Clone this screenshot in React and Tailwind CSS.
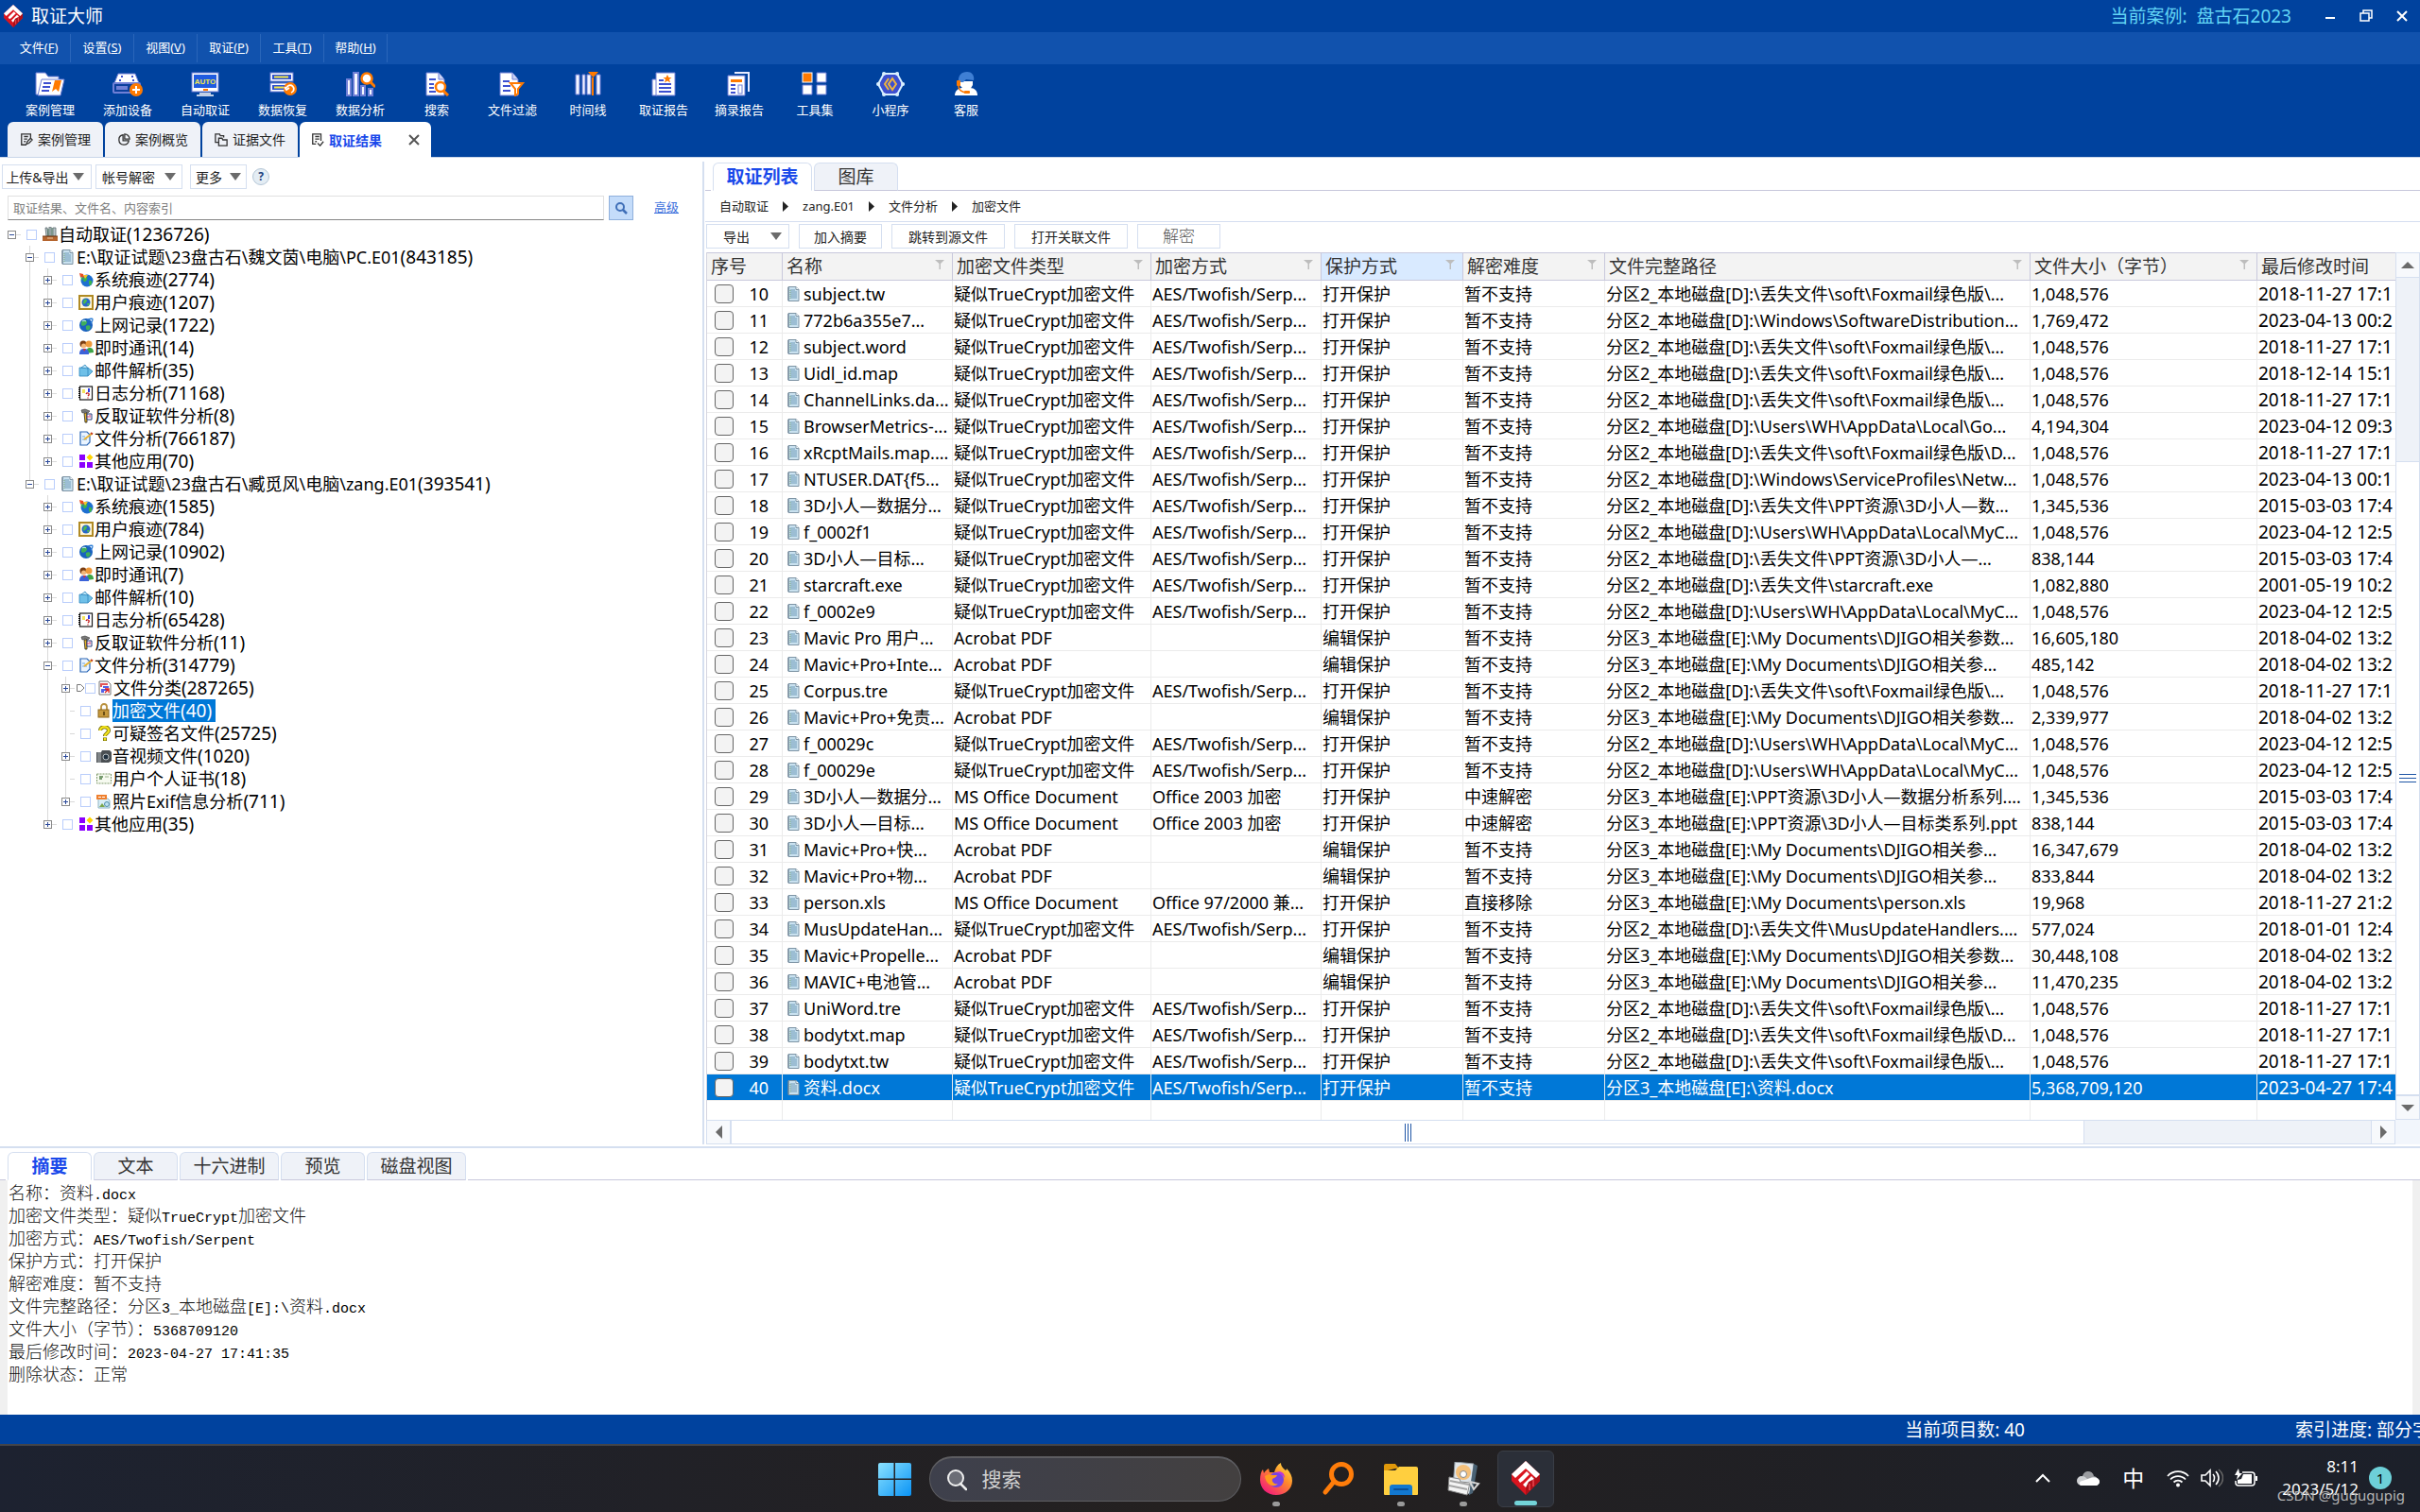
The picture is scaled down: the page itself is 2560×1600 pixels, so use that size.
import React from "react";

/* ---------- brand mark ---------- */
function Brand({ className }) {
  return (
    <svg viewBox="0 0 30 36" className={className} aria-hidden="true">
      <path d="M15 0 L30 14 V21 L15 36 L0 21 V14 Z" fill="#d9151f" />
      <path d="M15 36 L30 21 V14 L15 23 Z" fill="#b00f18" />
      <path d="M15 0 L30 14 L26 18 L15 8 L4 18 L0 14 Z" fill="#fff" />
      <path d="M7 20 L16 11 L19 14 L12 21 L9 23 Z" fill="#fff" />
      <path d="M12 25 L21 16 L24 19 L18 22 L15 28 Z" fill="#fff" />
      <path d="M19 24 V31 M23 20 V27" stroke="#e94a50" strokeWidth="1.5" />
    </svg>
  );
}

/* ---------- toolbar icons, 32 x 26 ---------- */
const P = "#6f7fd6";
const O = "#ff7a00";
const TOOL_ICONS = {
  cases: (
    <>
      <path d="M1 1h10l3 4h11v19H1z" fill="#fff" stroke={P} />
      <path d="M7 8h24l-4 17H3z" fill="#fff" stroke={P} />
      <path d="M9 12h8M8 16h8M7 20h8" stroke="#3c4fd0" strokeWidth="2" />
      <path d="M21 9h7l-3 12-3-3-4 3z" fill={O} />
    </>
  ),
  device: (
    <>
      <path d="M6 2h18l4 10H2z" fill="#fff" stroke={P} />
      <rect x="1" y="12" width="28" height="10" rx="1" fill="#0b3f9c" stroke={P} strokeWidth="2" />
      <rect x="4" y="15" width="12" height="4" fill={P} />
      <path d="M9 4h2v2H9zM20 4h2v2h-2zM7 8h2v2H7zM21 8h2v2h-2z" fill="#3c4fd0" />
      <circle cx="25" cy="19" r="7" fill={O} />
      <path d="M25 15v8M21 19h8" stroke="#fff" strokeWidth="2" />
    </>
  ),
  auto: (
    <>
      <rect x="2" y="1" width="28" height="20" fill="#fff" stroke={P} />
      <rect x="4" y="3" width="24" height="14" fill="#1f5be0" />
      <text x="16" y="13" textAnchor="middle" fontSize="8" fontWeight="700" fontFamily="Liberation Sans, sans-serif" fill="#f3e94a">AUTO</text>
      <rect x="14" y="18" width="5" height="2" fill={O} />
      <path d="M10 23h12M7 25h18" stroke="#fff" strokeWidth="1.5" />
    </>
  ),
  recover: (
    <>
      <rect x="3" y="1" width="24" height="9" fill="#fff" stroke={P} />
      <rect x="5" y="3" width="20" height="5" fill="#2d4fd0" />
      <path d="M7 5.500h15" stroke="#f3e94a" strokeWidth="2" />
      <rect x="3" y="12" width="24" height="9" fill="#fff" stroke={P} />
      <rect x="5" y="14" width="14" height="5" fill="#2d4fd0" />
      <path d="M7 16.500h10" stroke="#f3e94a" strokeWidth="2" />
      <circle cx="24" cy="18" r="7" fill={O} />
      <path d="M20 17a4 4 0 1 1 5 5M18 16l2 3 3-2" stroke="#fff" strokeWidth="1.800" fill="none" />
    </>
  ),
  analysis: (
    <>
      <path d="M2 8h4v17H2zM9 1h5v24H9zM17 15h4v10h-4zM25 18h4v7h-4z" fill="#f4f6ff" stroke={P} strokeWidth="2" />
      <circle cx="23" cy="7" r="5.500" fill="#fff" stroke={O} strokeWidth="2.500" />
      <path d="M27 11l5 5" stroke={O} strokeWidth="3" />
    </>
  ),
  search: (
    <>
      <path d="M5 1h13l6 7v17H5z" fill="#fff" stroke={P} />
      <path d="M18 1v7h6" fill="#cdd5f5" stroke={P} />
      <path d="M8 8h7M8 13h5M8 17h5M8 21h7" stroke="#3c4fd0" strokeWidth="2" />
      <circle cx="20" cy="16" r="5" fill="#fff" stroke={O} strokeWidth="2.500" />
      <path d="M23 20l5 5" stroke={O} strokeWidth="3" />
    </>
  ),
  filter: (
    <>
      <path d="M3 1h13l6 7v17H3z" fill="#fff" stroke={P} />
      <path d="M16 1v7h6" fill="#cdd5f5" stroke={P} />
      <path d="M6 10h7M6 15h8M6 20h8" stroke="#3c4fd0" strokeWidth="2" />
      <path d="M14 12h13l-5 6v5l-3 2v-7z" fill="#fff" stroke={O} strokeWidth="2" />
    </>
  ),
  timeline: (
    <>
      <path d="M3 3h4v21H3zM10 3h3v21h-3zM15 3h4v21h-4zM25 3h4v21h-4z" fill="#f4f6ff" stroke={P} />
      <path d="M21 6v19" stroke={O} strokeWidth="2" />
      <path d="M16 0h11l-5.500 6z" fill={O} />
    </>
  ),
  report: (
    <>
      <path d="M4 8h5v17H4z" fill="#fff" stroke={P} />
      <path d="M8 1h20v24H8z" fill="#fff" stroke={P} />
      <path d="M20 3l1.500 3h3l-2.500 2 1 3.500-3-2-3 2 1-3.500-2.500-2h3z" fill={O} />
      <path d="M11 9h5M11 13h13M11 17h13M11 21h13" stroke="#3c4fd0" strokeWidth="2" />
    </>
  ),
  excerpt: (
    <>
      <path d="M11 1h15v20" fill="none" stroke="#e7ebff" strokeWidth="2" />
      <path d="M4 4h18v21H4z" fill="#fff" stroke={P} />
      <rect x="7" y="8" width="12" height="3" fill={O} />
      <path d="M7 14h5M7 18h5M7 22h5" stroke="#3c4fd0" strokeWidth="2" />
      <rect x="15" y="14" width="4" height="9" fill="#fff" stroke={P} />
    </>
  ),
  tools: (
    <>
      <rect x="3" y="1" width="10" height="10" fill={O} stroke="#fff" />
      <path d="M18 1h10v10H18zM3 14h10v10H3zM18 14h10v10H18z" fill="#fff" stroke={P} />
    </>
  ),
  mini: (
    <>
      <path d="M9 2h14l6 11-6 11H9L3 13z" fill="#3c4fd0" stroke="#d9f0ff" strokeWidth="2" />
      <path d="M9 2h.1M23 2h.1M29 13h.1M23 24h.1M9 24h.1M3 13h.1" stroke="#d9f0ff" strokeWidth="4" strokeLinecap="round" />
      <path d="M14 7l-4 6 4 6M18 7l-4 6 4 6 4-6z" fill="none" stroke="#f0b43c" strokeWidth="2" />
    </>
  ),
  service: (
    <>
      <path d="M4 25c0-5 4-8 8-8h8c5 0 8 3 8 8z" fill="#fff" />
      <path d="M9 10h14v4l-3 5h-6l-4-4z" fill="#fff" />
      <path d="M8 11C7 4 11 0 17 0s8 5 7 9l-8-1-3 3z" fill="#3f7fd4" />
      <rect x="6" y="9" width="4" height="6" rx="1" fill={O} />
      <path d="M8 15c0 4 3 6 7 7" stroke={O} strokeWidth="1.500" fill="none" />
      <rect x="14" y="20" width="6" height="3" rx="1" fill={O} />
    </>
  ),
};

const TOOLS = [
  ["案例管理", "cases"],
  ["添加设备", "device"],
  ["自动取证", "auto"],
  ["数据恢复", "recover"],
  ["数据分析", "analysis"],
  ["搜索", "search"],
  ["文件过滤", "filter"],
  ["时间线", "timeline"],
  ["取证报告", "report"],
  ["摘录报告", "excerpt"],
  ["工具集", "tools"],
  ["小程序", "mini"],
  ["客服", "service"],
];

const MENUS = [
  ["文件", "F"],
  ["设置", "S"],
  ["视图", "V"],
  ["取证", "P"],
  ["工具", "T"],
  ["帮助", "H"],
];

/* ---------- tree icons, 16 x 16 ---------- */
const DOC = (
  <>
    <path d="M2 .5h8l3 3v12H2z" fill="#c9e1ef" stroke="#7f95a5" />
    <path d="M10 .5v3h3" fill="#fff" stroke="#7f95a5" />
    <path d="M2 1v14" stroke="#62788a" />
    <path d="M4 4h5M4 6h7M4 8h7M4 10h7M4 12h7" stroke="#6f9ab8" />
    <path d="M4 4v9" stroke="#7fae7c" strokeDasharray="1 1" />
  </>
);
const TREE_ICONS = {
  root: (
    <>
      <path d="M3 1l2 0 1 9H4zM7 0h2v10H7zM11 1h3v9h-3z" fill="#b8c6c9" stroke="#5e6b6e" strokeWidth=".8" />
      <path d="M6 2v8M10 1v9" stroke="#3d6b57" />
      <path d="M0 10h16v5H0z" fill="#b5652f" />
      <path d="M0 10h16" stroke="#6b3413" />
      <path d="M5 12h6" stroke="#f0d0a8" />
    </>
  ),
  disk: DOC,
  sys: (
    <>
      <circle cx="9" cy="9" r="6.500" fill="#1d6fd0" />
      <path d="M6 5c3-1 4 1 3 3s-3 3-4 1zM11 9c2-1 4 0 3 3s-3 2-3 0z" fill="#3cb54a" />
      <path d="M1 1l4 1 1 4-4-1z" fill="#e84c22" />
      <path d="M5 3l5 0-3 4z" fill="#f6c52b" />
      <path d="M2 5l2 4 1-3z" fill="#3cb54a" />
    </>
  ),
  user: (
    <>
      <rect x="1" y="1" width="14" height="14" fill="#fff6d6" stroke="#b08a24" strokeWidth="2" />
      <circle cx="8" cy="8" r="4.500" fill="#2767c9" />
      <path d="M6 5c3-1 4 1 2 3s-3 2-3 0zM9 9l3 0-2 3z" fill="#4cba50" />
    </>
  ),
  web: (
    <>
      <circle cx="8" cy="8" r="7" fill="#1a62bf" />
      <path d="M3 5c1-3 6-3 6 0S4 10 3 8zM8 9c3-2 6 0 4 3s-5 1-4-3z" fill="#3fae5a" />
      <path d="M10 2c3-1 5-1 5 0s-1 3-2 4" stroke="#2f7fd6" strokeWidth="1.300" fill="none" />
      <path d="M4 4c1-1 3-1 4 0" stroke="#d5f3ff" fill="none" />
    </>
  ),
  im: (
    <>
      <circle cx="5" cy="4" r="3.500" fill="#7a3d12" />
      <circle cx="11" cy="4" r="3.500" fill="#ef9a3c" />
      <path d="M8 14c0-5 2-6 4-6s4 1 4 5z" fill="#3da446" />
      <circle cx="5.500" cy="6" r="2.500" fill="#f2b77a" />
      <path d="M1 15c0-5 2-6 5-6s5 1 5 6z" fill="#3b62d9" />
      <path d="M5 9l1 3 2-3z" fill="#d83434" />
    </>
  ),
  mail: (
    <>
      <path d="M1 5h9l5 4-5 5H1z" fill="#6fc0e8" stroke="#2f86bd" strokeWidth=".8" />
      <path d="M3 5l4-3 3 4z" fill="#b9e4f7" stroke="#2f86bd" strokeWidth=".8" />
      <path d="M10 5v9" stroke="#2f86bd" strokeWidth=".8" />
    </>
  ),
  log: (
    <>
      <rect x="1.500" y="1" width="13" height="14" fill="#fff" stroke="#1a1a1a" strokeWidth="1.200" />
      <path d="M1 2v12" stroke="#000" strokeWidth="2" strokeDasharray="1 1" />
      <path d="M4 4h3v4H4z" fill="#f2e35b" />
      <path d="M11 3v4" stroke="#2a3be0" strokeWidth="2" />
      <path d="M8 9c1-2 4-1 3 1l-1 1M10 12.500v1" stroke="#c01a1a" strokeWidth="1.300" fill="none" />
    </>
  ),
  anti: (
    <>
      <path d="M3 2l4-1 5 2-2 2-3-1-3 1z" fill="#7b7b7b" stroke="#333" strokeWidth=".6" />
      <path d="M6 5h3v10H7z" fill="#e3b229" stroke="#222" strokeWidth=".8" />
      <path d="M9 6h5v6H9z" fill="#fff" stroke="#24387a" />
      <path d="M10 10V8M12 10V7" stroke="#d22f6b" />
    </>
  ),
  file: (
    <>
      <path d="M2 1h7l3 3v8l-3 3H2z" fill="#eaf4ff" stroke="#2b67b5" strokeWidth="1.200" />
      <path d="M4 6h3M4 9h5" stroke="#69a4de" />
      <path d="M6 9l8-6" stroke="#e9b534" strokeWidth="2" />
      <path d="M13 2l2 1.500" stroke="#c43b1c" strokeWidth="2" />
    </>
  ),
  other: (
    <>
      <path d="M1 1h6v6H1zM1 9h6v6H1zM9 9h6v6H9z" fill="#8a00ff" />
      <path d="M12 .5l3.500 3.500L12 7.500 8.500 4z" fill="#ffd400" />
    </>
  ),
  category: (
    <>
      <path d="M2 1h9l3 3v11H2z" fill="#fff" stroke="#777" />
      <path d="M4 3v4M5 4h6" stroke="#d81e1e" strokeWidth="1.500" />
      <path d="M6 7h6M4 10h6M4 12h3" stroke="#1b2ee0" strokeWidth="1.500" />
      <path d="M8 9l4 0 0 4M8 13l4-4" stroke="#e01b1b" strokeWidth="1.300" fill="none" />
    </>
  ),
  lock: (
    <>
      <path d="M5 7V4a3 3 0 0 1 6 0v3" stroke="#b9913e" strokeWidth="1.800" fill="none" />
      <rect x="2" y="7" width="11" height="8" fill="#c79a3e" stroke="#8c6517" />
      <path d="M8 9v4" stroke="#4c3508" strokeWidth="1.500" />
    </>
  ),
  question: (
    <>
      <path d="M4 5c0-5 9-5 9 0 0 3-4 3-4 6M9 12.500V16" stroke="#6b6400" strokeWidth="4" fill="none" />
      <path d="M4 5c0-5 9-5 9 0 0 3-4 3-4 6M9 13v2.500" stroke="#f2e21c" strokeWidth="2.500" fill="none" />
    </>
  ),
  media: (
    <>
      <path d="M0 4h5l1-2h8l2 2v9l-3 2H0z" fill="#4a4f53" />
      <path d="M2 4v11M4 4v11" stroke="#b4babd" />
      <circle cx="10" cy="9" r="3" fill="#20303f" stroke="#b8c0c4" />
    </>
  ),
  cert: (
    <>
      <rect x=".5" y="3" width="15" height="10" fill="#f6faf0" stroke="#7f9a6a" strokeDasharray="2 1" />
      <path d="M3 6h4M3 8h3" stroke="#4f7d46" strokeWidth="1.500" />
      <path d="M9 6h4" stroke="#9bb28b" />
    </>
  ),
  exif: (
    <>
      <path d="M2 5h10l2 2v8H2z" fill="#d9eef7" stroke="#8fb5c5" />
      <rect x="0" y="1" width="11" height="5" fill="#ef7f2d" />
      <path d="M2 3.500h3M6 3.500h3" stroke="#fff" />
      <path d="M3 14l3-4 3 4z" fill="#7aa64b" />
      <circle cx="11" cy="11" r="2.500" fill="#bfe2f2" stroke="#4c8aa8" />
    </>
  ),
};

/* level, text, count, icon, state ("-" open, "+" closed, "" leaf), ancestor levels with a running line, selected, last child */
const TREE = [
  [0, "自动取证", 1236726, "root", "-", [], false, true],
  [1, "E:\\取证试题\\23盘古石\\魏文茵\\电脑\\PC.E01", 843185, "disk", "-", []],
  [2, "系统痕迹", 2774, "sys", "+", [1]],
  [2, "用户痕迹", 1207, "user", "+", [1]],
  [2, "上网记录", 1722, "web", "+", [1]],
  [2, "即时通讯", 14, "im", "+", [1]],
  [2, "邮件解析", 35, "mail", "+", [1]],
  [2, "日志分析", 71168, "log", "+", [1]],
  [2, "反取证软件分析", 8, "anti", "+", [1]],
  [2, "文件分析", 766187, "file", "+", [1]],
  [2, "其他应用", 70, "other", "+", [1], false, true],
  [1, "E:\\取证试题\\23盘古石\\臧觅风\\电脑\\zang.E01", 393541, "disk", "-", [], false, true],
  [2, "系统痕迹", 1585, "sys", "+", []],
  [2, "用户痕迹", 784, "user", "+", []],
  [2, "上网记录", 10902, "web", "+", []],
  [2, "即时通讯", 7, "im", "+", []],
  [2, "邮件解析", 10, "mail", "+", []],
  [2, "日志分析", 65428, "log", "+", []],
  [2, "反取证软件分析", 11, "anti", "+", []],
  [2, "文件分析", 314779, "file", "-", []],
  [3, "文件分类", 287265, "category", "+", [2]],
  [3, "加密文件", 40, "lock", "", [2], true],
  [3, "可疑签名文件", 25725, "question", "", [2]],
  [3, "音视频文件", 1020, "media", "+", [2]],
  [3, "用户个人证书", 18, "cert", "", [2]],
  [3, "照片Exif信息分析", 711, "exif", "+", [2], false, true],
  [2, "其他应用", 35, "other", "+", [], false, true],
];

function TreeRow({ item }) {
  const [level, label, count, icon, state, guides, selected, last] = item;
  const ancestors = Array.from({ length: level }, (_, i) => i);
  return (
    <li className="flex h-6 items-center pl-[3px]">
      {ancestors.map((l) => (
        <span key={l} className="flex h-6 w-[19px] shrink-0 justify-center">
          {guides.includes(l) && <span className="w-px bg-[#d9d9d9]" />}
        </span>
      ))}
      <span className="flex h-6 w-[19px] shrink-0 items-center pl-[5px]">
        <span className="flex h-6 w-[9px] flex-col items-center">
          <span className={`w-px flex-1 ${level ? "bg-[#d9d9d9]" : ""}`} />
          {state ? (
            <button
              type="button"
              aria-label={`${state === "+" ? "展开" : "折叠"}${label}`}
              className="flex size-[9px] items-center justify-center border border-[#8a8a8a] bg-white"
            >
              <svg viewBox="0 0 7 7" className="size-[7px]" aria-hidden="true">
                <path d={state === "+" ? "M1 3.500h5M3.500 1v5" : "M1 3.500h5"} stroke="#2c4a9a" />
              </svg>
            </button>
          ) : (
            <span className="h-px w-px bg-[#d9d9d9]" />
          )}
          <span className={`w-px flex-1 ${level && !last ? "bg-[#d9d9d9]" : ""}`} />
        </span>
        <span className="h-px flex-1 bg-[#d9d9d9]" />
      </span>
      {icon === "category" && (
        <svg viewBox="0 0 9 8" className="ml-0.5 h-2 w-[9px] shrink-0" aria-hidden="true">
          <path d="M.5 .5h4L8 4 4.500 7.500h-4z" fill="#fff" stroke="#777" />
        </svg>
      )}
      <input
        type="checkbox"
        aria-label={label}
        className={`size-[11px] shrink-0 appearance-none border border-[#b9cdfb] bg-white ${icon === "category" ? "mr-0.5" : "mr-1.5 ml-1.5"}`}
      />
      <svg viewBox="0 0 16 16" className="size-4 shrink-0" aria-hidden="true">
        {TREE_ICONS[icon]}
      </svg>
      <span className={`ml-px h-6 text-[18px] leading-6 whitespace-nowrap ${selected ? "bg-[#0078d7] pr-1 text-white" : "text-black"}`}>
        {label}
        <span className="text-[19px]">({count})</span>
      </span>
    </li>
  );
}

/* ---------- result table ---------- */
const TC = ["疑似TrueCrypt加密文件", "AES/Twofish/Serp...", "打开保护", "暂不支持"];
const PDF = ["Acrobat PDF", "", "编辑保护", "暂不支持"];
const PPT = ["MS Office Document", "Office 2003 加密", "打开保护", "中速解密"];
const D = "分区2_本地磁盘[D]:\\";
const E = "分区3_本地磁盘[E]:\\";

const ROWS = [
  [10, "subject.tw", TC, D + "丢失文件\\soft\\Foxmail绿色版\\...", "1,048,576", "2018-11-27 17:1"],
  [11, "772b6a355e7...", TC, D + "Windows\\SoftwareDistribution...", "1,769,472", "2023-04-13 00:2"],
  [12, "subject.word", TC, D + "丢失文件\\soft\\Foxmail绿色版\\...", "1,048,576", "2018-11-27 17:1"],
  [13, "Uidl_id.map", TC, D + "丢失文件\\soft\\Foxmail绿色版\\...", "1,048,576", "2018-12-14 15:1"],
  [14, "ChannelLinks.da...", TC, D + "丢失文件\\soft\\Foxmail绿色版\\...", "1,048,576", "2018-11-27 17:1"],
  [15, "BrowserMetrics-...", TC, D + "Users\\WH\\AppData\\Local\\Go...", "4,194,304", "2023-04-12 09:3"],
  [16, "xRcptMails.map....", TC, D + "丢失文件\\soft\\Foxmail绿色版\\D...", "1,048,576", "2018-11-27 17:1"],
  [17, "NTUSER.DAT{f5...", TC, D + "Windows\\ServiceProfiles\\Netw...", "1,048,576", "2023-04-13 00:1"],
  [18, "3D小人—数据分...", TC, D + "丢失文件\\PPT资源\\3D小人—数...", "1,345,536", "2015-03-03 17:4"],
  [19, "f_0002f1", TC, D + "Users\\WH\\AppData\\Local\\MyC...", "1,048,576", "2023-04-12 12:5"],
  [20, "3D小人—目标...", TC, D + "丢失文件\\PPT资源\\3D小人—...", "838,144", "2015-03-03 17:4"],
  [21, "starcraft.exe", TC, D + "丢失文件\\starcraft.exe", "1,082,880", "2001-05-19 10:2"],
  [22, "f_0002e9", TC, D + "Users\\WH\\AppData\\Local\\MyC...", "1,048,576", "2023-04-12 12:5"],
  [23, "Mavic Pro 用户...", PDF, E + "My Documents\\DJIGO相关参数...", "16,605,180", "2018-04-02 13:2"],
  [24, "Mavic+Pro+Inte...", PDF, E + "My Documents\\DJIGO相关参...", "485,142", "2018-04-02 13:2"],
  [25, "Corpus.tre", TC, D + "丢失文件\\soft\\Foxmail绿色版\\...", "1,048,576", "2018-11-27 17:1"],
  [26, "Mavic+Pro+免责...", PDF, E + "My Documents\\DJIGO相关参数...", "2,339,977", "2018-04-02 13:2"],
  [27, "f_00029c", TC, D + "Users\\WH\\AppData\\Local\\MyC...", "1,048,576", "2023-04-12 12:5"],
  [28, "f_00029e", TC, D + "Users\\WH\\AppData\\Local\\MyC...", "1,048,576", "2023-04-12 12:5"],
  [29, "3D小人—数据分...", PPT, E + "PPT资源\\3D小人—数据分析系列....", "1,345,536", "2015-03-03 17:4"],
  [30, "3D小人—目标...", PPT, E + "PPT资源\\3D小人—目标类系列.ppt", "838,144", "2015-03-03 17:4"],
  [31, "Mavic+Pro+快...", PDF, E + "My Documents\\DJIGO相关参...", "16,347,679", "2018-04-02 13:2"],
  [32, "Mavic+Pro+物...", PDF, E + "My Documents\\DJIGO相关参...", "833,844", "2018-04-02 13:2"],
  [33, "person.xls", ["MS Office Document", "Office 97/2000 兼...", "打开保护", "直接移除"], E + "My Documents\\person.xls", "19,968", "2018-11-27 21:2"],
  [34, "MusUpdateHan...", TC, D + "丢失文件\\MusUpdateHandlers....", "577,024", "2018-01-01 12:4"],
  [35, "Mavic+Propelle...", PDF, E + "My Documents\\DJIGO相关参数...", "30,448,108", "2018-04-02 13:2"],
  [36, "MAVIC+电池管...", PDF, E + "My Documents\\DJIGO相关参...", "11,470,235", "2018-04-02 13:2"],
  [37, "UniWord.tre", TC, D + "丢失文件\\soft\\Foxmail绿色版\\...", "1,048,576", "2018-11-27 17:1"],
  [38, "bodytxt.map", TC, D + "丢失文件\\soft\\Foxmail绿色版\\D...", "1,048,576", "2018-11-27 17:1"],
  [39, "bodytxt.tw", TC, D + "丢失文件\\soft\\Foxmail绿色版\\...", "1,048,576", "2018-11-27 17:1"],
  [40, "资料.docx", TC, E + "资料.docx", "5,368,709,120", "2023-04-27 17:4"],
];

const COLUMNS = [
  ["序号", false],
  ["名称", true],
  ["加密文件类型", true],
  ["加密方式", true],
  ["保护方式", true],
  ["解密难度", true],
  ["文件完整路径", true],
  ["文件大小（字节）", true],
  ["最后修改时间", false],
];

const SUMMARY = [
  "名称：资料.docx",
  "加密文件类型：疑似TrueCrypt加密文件",
  "加密方式：AES/Twofish/Serpent",
  "保护方式：打开保护",
  "解密难度：暂不支持",
  "文件完整路径：分区3_本地磁盘[E]:\\资料.docx",
  "文件大小（字节）：5368709120",
  "最后修改时间：2023-04-27 17:41:35",
  "删除状态：正常",
];

/* Latin runs use a half-width monospace face beside the full-width characters */
function MonoLine({ text }) {
  return (
    <p>
      {text.split(/([\x20-\x7e]+)/).map((run, i) =>
        i % 2 ? (
          <span key={i} className="font-['Liberation_Mono',monospace] text-[15px] leading-none text-black">{run}</span>
        ) : (
          run
        )
      )}
    </p>
  );
}

function Caret({ className = "" }) {
  return (
    <svg viewBox="0 0 12 8" className={`h-2 w-3 shrink-0 ${className}`} aria-hidden="true">
      <path d="M0 0h12L6 8z" fill="#6b6b6b" />
    </svg>
  );
}

function Arrow({ dir }) {
  const d = { up: "M0 7h14L7 0z", down: "M0 0h14L7 7z", left: "M7 0v14L0 7z", right: "M0 0v14l7-7z" }[dir];
  const flat = dir === "up" || dir === "down";
  return (
    <svg viewBox={flat ? "0 0 14 7" : "0 0 7 14"} className={flat ? "h-[7px] w-3.5" : "h-3.5 w-[7px]"} aria-hidden="true">
      <path d={d} fill="#6b6b6b" />
    </svg>
  );
}

function PlainButton({ children, className = "" }) {
  return (
    <button type="button" className={`flex h-[26px] items-center justify-center border border-[#d5dff0] bg-white text-[14px] whitespace-nowrap text-[#222] ${className}`}>
      {children}
    </button>
  );
}

function PaneTab({ children, active, className = "" }) {
  return (
    <button
      type="button"
      className={`h-[30px] rounded-t-md border border-[#d5dff0] text-[19px] leading-7 ${active ? "border-b-white bg-white font-bold text-[#1a49ea]" : "border-b-[#c8c8dc] bg-[#eff2f8] text-[#333]"} ${className}`}
    >
      {children}
    </button>
  );
}

const DOC_TABS = [
  ["案例管理", <path key="a" d="M8 14H2V1h11v6M5 4h5M5 7h4M5 10h2M8 13l1-3 4-4 2 2-4 4z" />],
  ["案例概览", <path key="b" d="M7 2a6 6 0 1 0 7 7H7zM9 1v6h6a6 6 0 0 0-6-6z" />],
  ["证据文件", <path key="c" d="M5 11H1V1h5l1 2h4v2M5 6h4l1 2h5v7H5z" />],
];

function Header() {
  return (
    <header className="bg-[#00429e] text-white">
      <div className="flex h-[34px] items-center pr-3 pl-1">
        <Brand className="h-6 w-5" />
        <h1 className="ml-[9px] flex-1 text-[19px]">取证大师</h1>
        <span className="text-[19px] text-[#62d5f5]">当前案例:&nbsp; 盘古石2023</span>
        <div className="ml-9 flex items-center gap-6">
          <button type="button" aria-label="最小化" className="flex size-3 items-center">
            <span className="mt-1 h-0.5 w-2.5 bg-white" />
          </button>
          <button type="button" aria-label="还原" className="size-3.5">
            <svg viewBox="0 0 14 14" className="size-3.5" aria-hidden="true">
              <path d="M4 4V1h9v8h-3M1 4h9v8H1z" fill="none" stroke="#fff" strokeWidth="1.500" />
            </svg>
          </button>
          <button type="button" aria-label="关闭" className="size-3.5">
            <svg viewBox="0 0 14 14" className="size-3.5" aria-hidden="true">
              <path d="M2 2l10 10M12 2L2 12" stroke="#fff" strokeWidth="2" />
            </svg>
          </button>
        </div>
      </div>

      <nav className="flex h-[34px] items-center bg-[#1152ad] pl-2" aria-label="菜单">
        {MENUS.map(([label, key]) => (
          <button key={key} type="button" className="h-[30px] w-[67px] border-r border-[#2a66ba] text-[13px]">
            {label}(<u>{key}</u>)
          </button>
        ))}
      </nav>

      <div className="flex h-[61px] pt-2 pl-3">
        {TOOLS.map(([label, icon], i) => (
          <button key={label} type="button" className={`flex flex-col items-center ${i < 5 ? "w-[82px]" : "w-20"}`}>
            <svg viewBox="0 0 32 26" className="h-[26px] w-8" fill="none" aria-hidden="true">
              {TOOL_ICONS[icon]}
            </svg>
            <span className="mt-1 text-[13px] leading-5">{label}</span>
          </button>
        ))}
      </div>

      <div className="flex h-[38px] gap-0.5 border-b border-[#c9d6ea] pl-2">
        {DOC_TABS.map(([label, icon]) => (
          <button key={label} type="button" className="flex w-[101px] items-center justify-center gap-[5px] rounded-t-md bg-[#eff2f8] text-[14px] text-[#222]">
            <svg viewBox="0 0 16 16" className="size-3.5" fill="none" stroke="#333" strokeWidth="1.500" aria-hidden="true">
              {icon}
            </svg>
            {label}
          </button>
        ))}
        <div className="-mb-px flex w-[139px] items-center rounded-t-md bg-white pl-3">
          <button type="button" className="flex flex-1 items-center gap-[5px] text-[14px] font-bold text-[#1a49ea]">
            <svg viewBox="0 0 16 16" className="size-3.5" fill="none" stroke="#333" strokeWidth="1.500" aria-hidden="true">
              <path d="M6 13H2V1h10v8M5 4h5M5 7h5M5 10h2M8 12l3 3 4-5" />
            </svg>
            取证结果
          </button>
          <button type="button" aria-label="关闭标签" className="mr-3">
            <svg viewBox="0 0 12 12" className="size-3" aria-hidden="true">
              <path d="M1 1l10 10M11 1L1 11" stroke="#555" strokeWidth="2" />
            </svg>
          </button>
        </div>
      </div>
    </header>
  );
}

function LeftPane() {
  return (
    <aside className="w-[743px] shrink-0 pt-[7px]">
      <div className="flex items-center pl-0.5">
        <PlainButton className="w-[95px] gap-1 pr-1">上传&amp;导出<Caret /></PlainButton>
        <PlainButton className="ml-1 w-[92px] gap-2.5">帐号解密<Caret /></PlainButton>
        <PlainButton className="ml-2 w-[60px] gap-2">更多<Caret /></PlainButton>
        <button type="button" aria-label="帮助" className="ml-1.5 size-[18px] rounded-full border border-[#b4c6d6] bg-[#e4edf4] text-[12px] leading-4 font-bold text-[#1c3f7c]">?</button>
      </div>
      <form className="mt-[7px] flex items-center pl-2" onSubmit={(e) => e.preventDefault()}>
        <input
          type="text"
          aria-label="搜索取证结果"
          placeholder="取证结果、文件名、内容索引"
          className="h-[26px] w-[631px] border border-[#e0e0e0] border-b-[#868686] pl-[5px] text-[13px] placeholder:text-[#808080]"
        />
        <button type="submit" aria-label="搜索" className="ml-[5px] flex h-[26px] w-[26px] items-center justify-center border border-[#8fb0dc] bg-[#c4dcfa]">
          <svg viewBox="0 0 14 14" className="size-3.5" aria-hidden="true">
            <circle cx="6" cy="6" r="4" fill="none" stroke="#3f6fb8" strokeWidth="2" />
            <path d="M9 9l4 4" stroke="#3f6fb8" strokeWidth="2.500" />
          </svg>
        </button>
        <a href="#advanced" className="ml-[22px] text-[13px] text-[#3b6fdc] underline">高级</a>
      </form>
      <ul className="mt-[3px]">
        {TREE.map((item, i) => (
          <TreeRow key={i} item={item} />
        ))}
      </ul>
    </aside>
  );
}

function ResultTable() {
  return (
    <table className="w-full table-fixed border-separate border-spacing-0 border-l border-[#d5d5e0] text-[18px] text-black">
      <colgroup>
        <col className="w-20" />
        <col className="w-[180px]" />
        <col className="w-[210px]" />
        <col className="w-[180px]" />
        <col className="w-[150px]" />
        <col className="w-[150px]" />
        <col className="w-[450px]" />
        <col className="w-60" />
        <col />
      </colgroup>
      <thead>
        <tr className="h-[30px]">
          {COLUMNS.map(([name, filter]) => (
            <th
              key={name}
              scope="col"
              className={`overflow-hidden border-y border-r border-[#c8c8dc] p-0 pl-1 text-left font-normal whitespace-nowrap text-[#333] last:border-r-0 ${name === "保护方式" ? "bg-[#d9eaff]" : "bg-[#f3f3f3]"}`}
            >
              <div className="flex h-7 items-center justify-between pr-2 text-[19px] leading-7">
                <span>{name}</span>
                {filter && (
                  <svg viewBox="0 0 10 10" className="mb-1 size-2.5" aria-hidden="true">
                    <path d="M0 0h10L6 4v6H4.500V4z" fill="#bdbdbd" />
                  </svg>
                )}
              </div>
            </th>
          ))}
        </tr>
      </thead>
      <tbody>
        {ROWS.map(([no, name, [type, method, guard, level], path, size, date]) => {
          const sel = no === 40;
          return (
            <tr
              key={no}
              className={`h-7 [&>td]:overflow-hidden [&>td]:border-r [&>td]:border-b [&>td]:border-[#ebebeb] [&>td]:p-0 [&>td]:pt-px [&>td]:pl-px [&>td]:leading-[26px] [&>td]:whitespace-nowrap [&>td:last-child]:border-r-0 ${sel ? "bg-[#0078d7] text-white" : ""}`}
            >
              <td>
                <div className="flex items-center justify-between pr-3.5 pl-[7px]">
                  <input type="checkbox" aria-label={`选择 ${no}`} className="size-5 appearance-none rounded border border-[#666] bg-[#f3f3f3]" />
                  {no}
                </div>
              </td>
              <td>
                <div className="flex items-center gap-0.5 pl-[3px]">
                  <svg viewBox="0 0 16 16" className="size-4 shrink-0" aria-hidden="true">{DOC}</svg>
                  {name}
                </div>
              </td>
              <td>{type}</td>
              <td>{method}</td>
              <td>{guard}</td>
              <td>{level}</td>
              <td>{path}</td>
              <td>{size}</td>
              <td className="text-[19px]">{date}</td>
            </tr>
          );
        })}
        <tr className="h-5">
          {COLUMNS.map(([name]) => (
            <td key={name} className="border-r border-[#ebebeb] p-0 last:border-r-0" />
          ))}
        </tr>
      </tbody>
    </table>
  );
}

function RightPane() {
  return (
    <main className="min-w-0 flex-1 pl-px">
      <div className="flex gap-0.5 pt-[5px]">
        <span className="w-1.5 border-b border-[#c8c8dc]" />
        <PaneTab active className="w-[105px]">取证列表</PaneTab>
        <PaneTab className="w-[89px]">图库</PaneTab>
        <span className="-ml-0.5 flex-1 border-b border-[#c8c8dc]" />
      </div>
      <nav className="flex h-[33px] items-center gap-[15px] border-b border-[#d5dff0] pt-px pl-[15px] text-[13px] text-[#222]" aria-label="路径">
        {["自动取证", "zang.E01", "文件分析", "加密文件"].map((step, i) => (
          <React.Fragment key={step}>
            {i > 0 && (
              <svg viewBox="0 0 6 11" className="h-[11px] w-1.5" aria-hidden="true">
                <path d="M0 0l6 5.500L0 11z" fill="#222" />
              </svg>
            )}
            <a href="#step">{step}</a>
          </React.Fragment>
        ))}
      </nav>
      <div className="mb-1 flex gap-2.5 pt-0.5 pl-px">
        <PlainButton className="w-[88px] gap-[22px] pl-2.5">导出<Caret /></PlainButton>
        <PlainButton className="w-[88px]">加入摘要</PlainButton>
        <PlainButton className="w-[120px]">跳转到源文件</PlainButton>
        <PlainButton className="w-[120px]">打开关联文件</PlainButton>
        <button type="button" className="h-[26px] w-[88px] border border-[#d5dff0] text-[17px] leading-5 font-light text-[#555]">解密</button>
      </div>
      <div className="flex pl-px">
        <div className="min-w-0 flex-1 overflow-hidden">
          <ResultTable />
        </div>
        <div className="flex w-[26px] shrink-0 flex-col border border-[#d5dff0]" role="presentation">
          <span className="flex h-[25px] items-center justify-center bg-[#f7f9fc]"><Arrow dir="up" /></span>
          <span className="h-[196px] border-y border-[#d5dff0] bg-[#eef2f8]" />
          <span className="flex flex-1 flex-col items-center justify-center gap-[3px] bg-white">
            <span className="h-px w-[18px] bg-[#1f56a6]" />
            <span className="h-px w-[18px] bg-[#1f56a6]" />
            <span className="h-px w-[18px] bg-[#1f56a6]" />
          </span>
          <span className="flex h-[26px] items-center justify-center border-t-2 border-[#d5dff0] bg-[#f7f9fc]"><Arrow dir="down" /></span>
        </div>
      </div>
      <div className="mb-0.5 flex h-[26px] pl-px" role="presentation">
        <span className="flex w-[27px] items-center justify-center border border-r-2 border-[#d5dff0] bg-[#f7f9fc]"><Arrow dir="left" /></span>
        <span className="flex flex-1 items-center justify-center gap-0.5 border-y border-r border-[#d5dff0]">
          <span className="h-[19px] w-px bg-[#1f56a6]" />
          <span className="h-[19px] w-px bg-[#1f56a6]" />
          <span className="h-[19px] w-px bg-[#1f56a6]" />
        </span>
        <span className="w-[303px] border-y border-[#d5dff0] bg-[#eef2f8]" />
        <span className="flex w-[26px] items-center justify-center border border-[#d5dff0] bg-[#f7f9fc]"><Arrow dir="right" /></span>
        <span className="w-[26px] bg-[#f2f6fc]" />
      </div>
    </main>
  );
}

function BottomPane() {
  return (
    <section className="flex flex-1 flex-col border-t-2 border-[#d5dff0] pt-1">
      <div className="flex gap-0.5">
        <span className="w-1.5 border-b border-[#c8c8dc]" />
        <PaneTab active className="w-[89px]">摘要</PaneTab>
        <PaneTab className="w-[89px]">文本</PaneTab>
        <PaneTab className="w-[105px]">十六进制</PaneTab>
        <PaneTab className="w-[89px]">预览</PaneTab>
        <PaneTab className="w-[105px]">磁盘视图</PaneTab>
        <span className="flex-1 border-b border-[#c8c8dc]" />
      </div>
      <div className="flex-1 border-x-8 border-[#f0f0f0] pl-px font-['Noto_Sans_CJK_SC',sans-serif] text-[18px] leading-6 font-light text-[#111]">
        {SUMMARY.map((t) => (
          <MonoLine key={t} text={t} />
        ))}
      </div>
    </section>
  );
}

function TaskIcon({ label, children, dot, active }) {
  return (
    <button type="button" aria-label={label} className={`flex h-[60px] w-[60px] flex-col items-center justify-end rounded-md ${active ? "border border-[#3a3e46] bg-[#2b2f38]" : ""}`}>
      {children}
      <span className={`mt-1.5 mb-px h-[5px] rounded-full ${active ? "w-6 bg-[#73d3d8]" : dot ? "w-2 bg-[#9a9a9a]" : "w-2"}`} />
    </button>
  );
}

function Taskbar() {
  return (
    <footer className="relative grid h-[72px] grid-cols-[1fr_auto_1fr] items-center border-t-2 border-[#43454a] bg-linear-to-r from-[#1d2230] via-[#24201f] to-[#1c202a] text-white">
      <span />
      <div className="flex items-center pl-3">
        <button type="button" aria-label="开始" className="mr-[19px]">
          <svg viewBox="0 0 35 35" className="size-[35px]" aria-hidden="true">
            <defs>
              <linearGradient id="win" x1="0" y1="0" x2="1" y2="1">
                <stop offset="0" stopColor="#8be2ff" />
                <stop offset="1" stopColor="#0a93f5" />
              </linearGradient>
            </defs>
            <path d="M2 0h14.500v16.500H0V2a2 2 0 0 1 2-2zM18 0h15a2 2 0 0 1 2 2v14.500H18zM0 18h16.500v17H2a2 2 0 0 1-2-2zM18 18h17v15a2 2 0 0 1-2 2H18z" fill="url(#win)" />
          </svg>
        </button>
        <div className="mr-[7px] flex h-12 w-[330px] items-center rounded-full border border-t-2 border-[#5d5d61] bg-linear-to-r from-[#3e404c] to-[#434040] pl-[17px]">
          <svg viewBox="0 0 22 24" className="h-6 w-[22px]" aria-hidden="true">
            <circle cx="10" cy="10" r="8" fill="#6b6d76" stroke="#eee" strokeWidth="2" />
            <path d="M15 16l6 6" stroke="#eee" strokeWidth="2.500" strokeLinecap="round" />
          </svg>
          <input type="search" aria-label="搜索" placeholder="搜索" className="ml-4 w-60 bg-transparent text-[21px] outline-none placeholder:text-[#d2d2d2]" />
        </div>
        <div className="flex gap-1.5">
          <TaskIcon label="Firefox" dot>
            <svg viewBox="0 0 36 36" className="size-9" aria-hidden="true">
              <defs>
                <linearGradient id="fx" x1="1" y1="0" x2=".2" y2="1">
                  <stop offset="0" stopColor="#fff04a" />
                  <stop offset=".45" stopColor="#ff8a2a" />
                  <stop offset="1" stopColor="#f3157f" />
                </linearGradient>
              </defs>
              <path d="M18 35C8 35 1 28 1 19c0-5 1-9 3-11l1 4c1-2 3-4 5-5l1 4 5 0c1-4 3-8 7-10 0 4 3 6 5 8 1-1 1-1 1-2 4 4 6 8 6 13 0 9-8 15-17 15z" fill="url(#fx)" />
              <circle cx="18" cy="19" r="8" fill="#7542e5" />
              <path d="M6 15c3-2 6-2 8-1l5 0c-1 3-4 3-5 4-1 4 3 6 6 5-5 5-13 1-14-8z" fill="#ff9a1f" />
              <path d="M18 11c5-2 9 1 9 6-1-2-4-4-9-6z" fill="#b833e1" />
            </svg>
          </TaskIcon>
          <TaskIcon label="Everything">
            <svg viewBox="0 0 36 36" className="size-9" aria-hidden="true">
              <circle cx="21" cy="13" r="10.500" fill="none" stroke="#ff7d0a" strokeWidth="5" />
              <path d="M13 21L4 32" stroke="#ff7d0a" strokeWidth="5" strokeLinecap="round" />
            </svg>
          </TaskIcon>
          <TaskIcon label="文件资源管理器" dot>
            <svg viewBox="0 0 36 36" className="size-9" aria-hidden="true">
              <path d="M0 4a2 2 0 0 1 2-2h10l4 5h-4l-12 3z" fill="#e0980a" />
              <path d="M0 9h12l4-4h18a2 2 0 0 1 2 2v27a1 1 0 0 1-1 1H1a1 1 0 0 1-1-1z" fill="#ffcf3f" />
              <path d="M6 35v-8a3 3 0 0 1 3-3h18a3 3 0 0 1 3 3v8z" fill="#1278d0" />
              <path d="M11 29h14" stroke="#0a4f97" strokeWidth="2" strokeLinecap="round" />
            </svg>
          </TaskIcon>
          <TaskIcon label="磁盘镜像" dot>
            <svg viewBox="0 0 36 36" className="size-9" aria-hidden="true">
              <path d="M9 0l20 2-4 32-18-6z" fill="#dfe5ea" stroke="#8d979e" />
              <path d="M29 2l4 2-5 29-4 2z" fill="#4a6274" />
              <circle cx="18" cy="11" r="8" fill="#f4c07a" />
              <circle cx="18" cy="13" r="3.500" fill="#fff" stroke="#888" />
              <path d="M3 16l11 2 1 3 10 1-3 13-20-5z" fill="#f4f4f4" stroke="#8a8a8a" />
              <path d="M4 20l20 4M3 25l19 4" stroke="#a5a5a5" strokeWidth="2" />
              <path d="M25 21l9 2-5 6z" fill="none" stroke="#d5d5d5" strokeWidth="2" />
            </svg>
          </TaskIcon>
          <TaskIcon label="取证大师" active>
            <Brand className="h-9 w-[30px]" />
          </TaskIcon>
        </div>
      </div>
      <div className="flex items-center justify-self-end pr-[30px] pb-0.5">
        <svg viewBox="0 0 16 10" className="mr-7 h-2.5 w-4" fill="none" stroke="#fff" strokeWidth="2" aria-hidden="true">
          <path d="M1 9l7-7 7 7" />
        </svg>
        <svg viewBox="0 0 24 16" className="mr-6 h-4 w-6" aria-hidden="true">
          <path d="M6 8a6 6 0 0 1 12-2 5 5 0 0 1 4 4H4z" fill="#9a9ca0" />
          <path d="M5 16a5 5 0 0 1 0-10c3 0 4 1 6 3l3-1c3-2 10-1 10 4 0 2-2 4-4 4z" fill="#cfd1d4" />
          <path d="M4 16c-2-2-1-5 2-5l9-3c4-1 9 0 9 4 0 2-2 4-4 4z" fill="#fff" />
        </svg>
        <span className="mr-6 text-[23px] leading-6">中</span>
        <svg viewBox="0 0 24 20" className="mr-3 h-5 w-6" fill="none" stroke="#fff" strokeWidth="1.800" aria-hidden="true">
          <path d="M1 8a15 15 0 0 1 22 0M4 11.500a11 11 0 0 1 16 0M7.500 14.500a6.500 6.500 0 0 1 9 0" />
          <circle cx="12" cy="17.500" r="2" fill="#fff" stroke="none" />
        </svg>
        <svg viewBox="0 0 24 20" className="mr-3 h-5 w-6" fill="none" stroke="#fff" strokeWidth="1.600" aria-hidden="true">
          <path d="M1 7h4l5-5v16l-5-5H1zM13 6c2 2 2 6 0 8M16 3c4 4 4 10 0 14" />
          <path d="M19 1c6 5 6 13 0 18" stroke="#666" />
        </svg>
        <svg viewBox="0 0 24 20" className="mr-[26px] h-5 w-6" fill="none" aria-hidden="true">
          <path d="M8 4h10a3 3 0 0 1 3 3v8a3 3 0 0 1-3 3H4a3 3 0 0 1-3-3v-2" stroke="#fff" strokeWidth="1.500" />
          <path d="M9 6h9v10H3v-4l4-1z" fill="#fff" />
          <path d="M22 8h2v5h-2z" fill="#fff" />
          <path d="M4 0L0 7h3l-1 5 6-7H5z" fill="#fff" />
        </svg>
        <div className="mr-[11px] text-right text-[17px] leading-6">
          <div>8:11</div>
          <div>2023/5/12</div>
        </div>
        <span className="flex size-6 items-center justify-center rounded-full bg-[#6dd0d8] text-[15px] text-black">1</span>
      </div>
      <span className="absolute right-4 bottom-2 text-[15px] leading-5 text-[#b4b4b4]">CSDN @gugugupig</span>
    </footer>
  );
}

export default function App() {
  return (
    <div className="flex min-h-screen w-full flex-col overflow-hidden bg-white font-['Noto_Sans','Noto_Sans_CJK_SC',sans-serif]">
      <Header />
      <div className="flex">
        <LeftPane />
        <span className="mt-1 mb-0.5 w-0.5 shrink-0 bg-[#d5dff0]" />
        <RightPane />
      </div>
      <BottomPane />
      <div className="flex h-[31px] items-center justify-end overflow-hidden bg-[#00429e] pt-0.5 text-[19px] text-white">
        <span className="mr-[286px] whitespace-nowrap">当前项目数: 40</span>
        <span className="w-[132px] overflow-hidden whitespace-nowrap">索引进度: 部分字</span>
      </div>
      <Taskbar />
    </div>
  );
}
